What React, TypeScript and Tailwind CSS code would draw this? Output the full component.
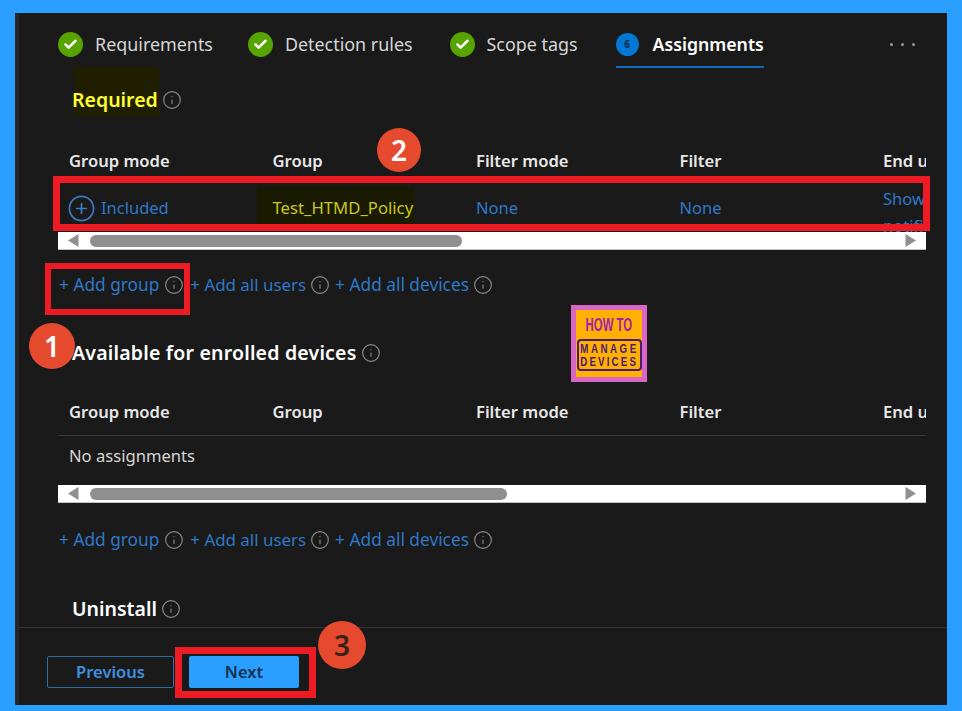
import type { ReactNode } from "react"
import { Check, CirclePlus, Info } from "lucide-react"

const columns = ["Group mode", "Group", "Filter mode", "Filter", "End user notification"]

function InfoIcon() {
  return <Info className="h-5 w-5 shrink-0 text-[#8a8a8a]" strokeWidth={1.4} />
}

function Step({ label, className = "" }: { label: string; className?: string }) {
  return (
    <div className={`flex items-center gap-3 ${className}`}>
      <span className="flex h-[25px] w-[25px] items-center justify-center rounded-full bg-[#57a300]">
        <Check className="h-[15px] w-[15px] text-white" strokeWidth={4} />
      </span>
      <span className="text-[17.9px] text-[#d6d6d6]">{label}</span>
    </div>
  )
}

function Heading({ children, className }: { children: ReactNode; className: string }) {
  return (
    <div className={`flex h-6 items-center gap-1 pl-[14px] ${className}`}>
      <span className="text-[19.5px] font-semibold text-white">{children}</span>
      <InfoIcon />
    </div>
  )
}

function HeaderRow({ className }: { className: string }) {
  return (
    <div className={`grid grid-cols-[repeat(5,203.5px)] items-center overflow-hidden whitespace-nowrap pl-[11px] text-[16.6px] font-semibold text-[#e8e8e8] ${className}`}>
      {columns.map(c => (
        <div key={c}>{c}</div>
      ))}
    </div>
  )
}

function Scrollbar({ thumb, className }: { thumb: string; className: string }) {
  return (
    <div className={`flex h-[18px] items-center border-b border-[#c4c4c4] bg-white pl-[10px] pr-[10px] ${className}`}>
      <svg width="11" height="13" viewBox="0 0 11 13" className="shrink-0">
        <path d="M10.5 0v13L0 6.5z" fill="#8f8f8f" />
      </svg>
      <div className={`ml-[11px] h-3 rounded-full bg-[#8f8f8f] ${thumb}`} />
      <svg width="11" height="13" viewBox="0 0 11 13" className="ml-auto shrink-0">
        <path d="M.5 0v13L11 6.5z" fill="#8f8f8f" />
      </svg>
    </div>
  )
}

function AddLinks({ className }: { className: string }) {
  return (
    <div className={`flex h-[22px] items-center whitespace-nowrap pl-px text-[17.3px] text-[#2f78c8] ${className}`}>
      <span>+ Add group</span>
      <span className="ml-[5px]"><InfoIcon /></span>
      <span className="ml-[6px] text-[16.9px]">+ Add all users</span>
      <span className="ml-[4px]"><InfoIcon /></span>
      <span className="ml-[5px]">+ Add all devices</span>
      <span className="ml-[4px]"><InfoIcon /></span>
    </div>
  )
}

function Marker({ n, className }: { n: number; className: string }) {
  return (
    <div className={`absolute flex items-center justify-center rounded-full bg-[#e64a2e] text-[28px] font-semibold ${className}`}>
      {n}
    </div>
  )
}

export default function App() {
  return (
    <div className="relative h-[711px] w-[962px] overflow-hidden bg-[#2a9fff] pb-[6px] pl-[15px] pr-[15px] pt-[13px] font-['Noto_Sans',sans-serif]">
      <div className="flex h-full flex-col border-l-4 border-[#262626] bg-[#1a1a1a]">
        <div className="flex-1 overflow-hidden pl-[39px] pr-[21px]">
          <div className="flex h-[55px] items-center pt-2">
            <div className="flex items-center gap-[35px]">
              <Step label="Requirements" />
              <Step label="Detection rules" />
              <Step label="Scope tags" className="ml-[2px]" />
              <div className="ml-[3px] flex h-[47px] items-center gap-[14px] border-b-2 border-[#0f6cbd] pt-[1px]">
                <span className="flex h-[23px] w-[23px] items-center justify-center rounded-full bg-[#0078d4] text-[10px] font-bold text-[#0b2a4a]">
                  6
                </span>
                <span className="text-[17.7px] font-semibold text-white">Assignments</span>
              </div>
            </div>
            <div className="ml-auto mr-[11px] flex gap-2">
              <span className="h-[3px] w-[3px] rounded-full bg-[#9a9a9a]" />
              <span className="h-[3px] w-[3px] rounded-full bg-[#9a9a9a]" />
              <span className="h-[3px] w-[3px] rounded-full bg-[#9a9a9a]" />
            </div>
          </div>

          <div className="mt-5 flex h-6 items-center gap-1 pl-[14px]">
            <span className="relative isolate text-[19.5px] font-semibold text-[#ffff33]">
              <span className="absolute -top-[18px] left-[2px] -z-10 h-[49px] w-[85px] bg-[#1f1f00]" />
              Required
            </span>
            <InfoIcon />
          </div>

          <HeaderRow className="mt-7 h-[42px]" />
          <div className="grid h-[50px] grid-cols-[repeat(5,203.5px)] overflow-hidden whitespace-nowrap border-t border-[#3a3a3a] pl-[11px] text-[16.5px] text-[#2f78c8]">
            <div className="-ml-[2px] flex h-[50px] items-center gap-[5px]">
              <CirclePlus className="h-[29px] w-[29px] text-[#3f79c4]" strokeWidth={1.4} />
              Included
            </div>
            <div className="flex h-[50px] items-center">
              <span className="relative isolate text-[16.7px] text-[#c8c81e]">
                <span className="absolute -left-[16px] -right-px -top-[8px] -z-10 h-[40px] bg-[#1a1a00]" />
                Test_HTMD_Policy
              </span>
            </div>
            <div className="flex h-[50px] items-center">None</div>
            <div className="flex h-[50px] items-center">None</div>
            <div className="pt-[2px] leading-[27px]">
              Show
              <br />
              notifications
            </div>
          </div>
          <Scrollbar thumb="w-[372px]" className="" />
          <AddLinks className="mt-6" />

          <Heading className="mt-[45px] tracking-[0.2px]">Available for enrolled devices</Heading>
          <HeaderRow className="mt-[24px] h-[47px] border-b border-[#3a3a3a]" />
          <div className="flex h-[40px] items-center pl-[11px] text-[16.6px] text-[#d6d6d6]">No assignments</div>
          <Scrollbar thumb="w-[417px]" className="mt-[9px]" />
          <AddLinks className="mt-[26px]" />

          <Heading className="mt-[46px]">Uninstall</Heading>
        </div>

        <div className="flex h-[78px] shrink-0 items-start gap-[15px] border-t border-[#333333] pl-7 pt-7">
          <button className="h-8 w-[127px] rounded-[2px] border border-[#2c6ea6] text-[16.5px] font-semibold text-[#3f8fe0]">
            Previous
          </button>
          <button className="h-8 w-[110px] rounded-[2px] bg-[#2a9fff] text-[16.5px] font-semibold text-[#12304f]">
            Next
          </button>
        </div>
      </div>

      <div className="absolute left-[53px] top-[176px] h-[55px] w-[877px] border-[7px] border-[#ed1c24]" />
      <div className="absolute left-[45px] top-[263px] h-[52px] w-[145px] border-[6px] border-[#ed1c24]" />
      <div className="absolute left-[175px] top-[647px] h-[51px] w-[141px] border-[7px] border-[#ed1c24]" />

      <Marker n={2} className="left-[377px] top-[128px] h-11 w-11 text-white" />
      <Marker n={1} className="left-[29px] top-[323px] h-[46px] w-[46px] text-white" />
      <Marker n={3} className="left-[318px] top-[621px] h-12 w-12 text-[#3a2018]" />

      <div className="absolute left-[571px] top-[305px] flex h-[77px] w-[76px] flex-col items-center whitespace-nowrap border-[5px] border-[#d966c4] bg-[#ffb000] pt-[5px] font-['Liberation_Sans',sans-serif] font-bold">
        <div className="text-[19px] leading-[20px] text-[#a020b0] [transform:scaleX(0.6)]">HOW TO</div>
        <div className="mt-[4px] flex h-[32px] w-[65px] flex-col items-center justify-center rounded-[4px] border-2 border-[#4b1a7a] text-[13.5px] leading-[13px] text-[#4b1a7a]">
          <span className="tracking-[3.5px] [transform:scaleX(0.72)]">MANAGE</span>
          <span className="tracking-[3px] [transform:scaleX(0.72)]">DEVICES</span>
        </div>
      </div>
    </div>
  )
}
